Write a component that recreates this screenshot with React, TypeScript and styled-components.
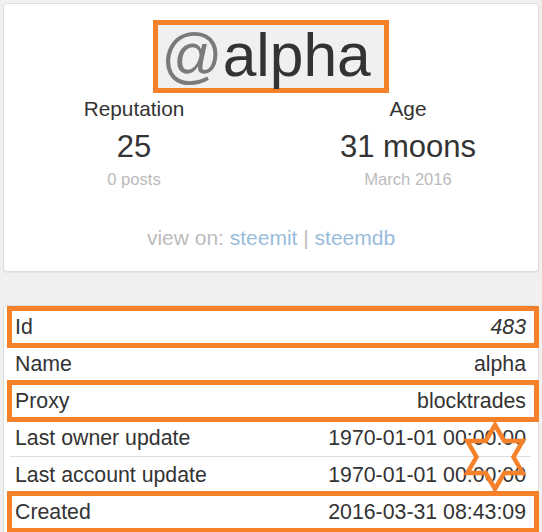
import React from 'react';
import styled, { createGlobalStyle } from 'styled-components';

const ORANGE = '#f5812b';

const GlobalStyle = createGlobalStyle`
  body {
    margin: 0;
    background: #f0f0f0;
    font-family: "Liberation Sans", Arial, sans-serif;
    color: #333;
  }
`;

const Page = styled.div`
  padding: 3px 3px 0 3px;
`;

const Card = styled.div`
  position: relative;
  background: #fff;
  border: 1px solid #ddd;
  border-radius: 4px;
  box-shadow: 0 1px 1px rgba(0, 0, 0, 0.05);
`;

const ProfileCard = styled(Card)`
  padding: 16px 0 18px;
  text-align: center;
`;

const Heading = styled.div`
  display: flex;
  justify-content: center;
`;

const Handle = styled.h1`
  margin: 0;
  font-size: 60.5px;
  line-height: 60px;
  font-weight: normal;
  color: #333;
  background: #f0f0f0;
  border: 5px solid ${ORANGE};
  padding: 0 13px 3px 3px;

  & span {
    color: #7a7a7a;
  }
`;

const Stats = styled.div`
  display: grid;
  grid-template-columns: 1fr 1fr;
  margin: 1.5px -7px 0;
`;

const Stat = styled.div`
  display: flex;
  flex-direction: column;
  align-items: center;
`;

const StatLabel = styled.div`
  font-size: 20.8px;
  line-height: 28.6px;
`;

const StatValue = styled.div`
  margin-top: 7px;
  font-size: 31px;
  line-height: 34px;
`;

const StatNote = styled.div`
  margin-top: 3.5px;
  font-size: 16.6px;
  line-height: 23.6px;
  color: #bbb;
`;

const ViewOn = styled.div`
  margin-top: 32px;
  font-size: 21px;
  line-height: 30px;
  color: #bbb;

  & a {
    color: #99bcdb;
    text-decoration: none;
  }
`;

const DetailsCard = styled(Card)`
  margin-top: 33px;
  padding: 2px 7px 8px 6px;
`;

const Row = styled.div<{ $marked?: boolean }>`
  position: relative;
  display: flex;
  justify-content: space-between;
  padding: 4px 5px;
  border-top: 1px solid #ddd;
  font-size: 21.3px;
  line-height: 28px;

  &::after {
    content: '';
    display: ${(p) => (p.$marked ? 'block' : 'none')};
    position: absolute;
    z-index: 1;
    top: -3.5px;
    bottom: -2.5px;
    left: -3.5px;
    right: -7.5px;
    border: 5.5px solid ${ORANGE};
    pointer-events: none;
  }
`;

const Value = styled.span<{ $italic?: boolean }>`
  font-style: ${(p) => (p.$italic ? 'italic' : 'normal')};
`;

const Star = styled.svg`
  position: absolute;
  left: 458px;
  top: 116px;
  z-index: 2;
  overflow: visible;
`;

const rows = [
  { label: 'Id', value: '483', italic: true, marked: true },
  { label: 'Name', value: 'alpha' },
  { label: 'Proxy', value: 'blocktrades', marked: true },
  { label: 'Last owner update', value: '1970-01-01 00:00:00' },
  { label: 'Last account update', value: '1970-01-01 00:00:00' },
  { label: 'Created', value: '2016-03-31 08:43:09', marked: true },
];

const starPoints =
  '33,3 42.24,19 60.71,19 51.48,35 60.71,51 42.24,51 33,67 23.76,51 5.29,51 14.52,35 5.29,19 23.76,19';

const App = () => {
  return (
    <Page>
      <GlobalStyle />
      <ProfileCard>
        <Heading>
          <Handle>
            <span>@</span>alpha
          </Handle>
        </Heading>
        <Stats>
          <Stat>
            <StatLabel>Reputation</StatLabel>
            <StatValue>25</StatValue>
            <StatNote>0 posts</StatNote>
          </Stat>
          <Stat>
            <StatLabel>Age</StatLabel>
            <StatValue>31 moons</StatValue>
            <StatNote>March 2016</StatNote>
          </Stat>
        </Stats>
        <ViewOn>
          view on: <a href="#">steemit</a> | <a href="#">steemdb</a>
        </ViewOn>
      </ProfileCard>
      <DetailsCard>
        {rows.map((r) => (
          <Row key={r.label} $marked={r.marked}>
            <span>{r.label}</span>
            <Value $italic={r.italic}>{r.value}</Value>
          </Row>
        ))}
        <Star width="66" height="70" viewBox="0 0 66 70">
          <polygon points={starPoints} fill="none" stroke={ORANGE} strokeWidth="4.5" />
        </Star>
      </DetailsCard>
    </Page>
  );
};

export default App;
